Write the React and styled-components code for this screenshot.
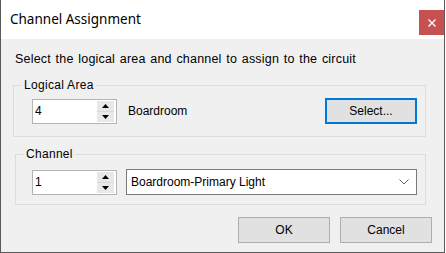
import React from "react";
import styled, { createGlobalStyle } from "styled-components";

const GlobalStyle = createGlobalStyle`
  body {
    margin: 0;
    background: #ffffff;
    font-family: "Liberation Sans", Arial, sans-serif;
  }
`;

const Window = styled.div`
  width: 443px;
  height: 252px;
  border: 1px solid #5b5b5b;
  border-top: none;
  background: #f0f0f0;
  display: flex;
  flex-direction: column;
`;

const TitleBar = styled.div`
  height: 39px;
  flex: none;
  background: #ffffff;
  display: flex;
  align-items: flex-start;
  justify-content: space-between;
  padding-left: 9px;
`;

const Title = styled.span`
  font-family: "Noto Sans", "Open Sans", sans-serif;
  font-size: 13.5px;
  line-height: 18px;
  margin-top: 10px;
  color: #000;
`;

const CloseButton = styled.div`
  width: 25px;
  height: 25px;
  margin-top: 10px;
  background: #c75050;
  display: flex;
  align-items: center;
  justify-content: center;
`;

const Body = styled.div`
  flex: 1;
  padding: 13px 15px 0 12px;
  display: flex;
  flex-direction: column;
  font-size: 12px;
  color: #000;
`;

const Instruction = styled.div`
  font-size: 12.5px;
  line-height: 14px;
  padding-left: 2px;
  margin-bottom: 12px;
  letter-spacing: 0.2px;
  word-spacing: 1px;
`;

const Group = styled.fieldset`
  margin: 0 3px ${(p) => p.$gap}px ${(p) => p.$shift}px;
  padding: 0;
  min-width: 0;
  border: 1px solid #dcdcdc;
`;

const Legend = styled.legend`
  margin-left: 8px;
  padding: 0 2px;
  line-height: 14px;
  font-size: 12px;
  letter-spacing: 0.3px;
`;

const GroupRow = styled.div`
  display: flex;
  align-items: center;
  padding: ${(p) => p.$top}px 8px ${(p) => p.$bottom}px
    ${(p) => 18 - p.$shift}px;
`;

const Spin = styled.div`
  width: 83px;
  height: 23px;
  flex: none;
  border: 1px solid #b4b4b4;
  background: #fff;
  display: flex;
  align-items: stretch;
`;

const SpinValue = styled.div`
  flex: 1;
  padding-left: 2px;
  line-height: 23px;
`;

const SpinButtons = styled.div`
  width: 17px;
  margin: 1px 2px 1px 0;
  display: flex;
  flex-direction: column;
  gap: 1px;
  background: #d8d8d8;
`;

const SpinArrow = styled.div`
  flex: 1;
  background: #e8e8e8;
  display: flex;
  align-items: center;
  justify-content: center;
`;

const AreaName = styled.span`
  margin-left: 11px;
  flex: 1;
`;

const Button = styled.div`
  width: ${(p) => (p.$focused ? 88 : 90)}px;
  height: ${(p) => (p.$focused ? 22 : 24)}px;
  flex: none;
  background: #e1e1e1;
  border: ${(p) => (p.$focused ? "2px solid #0078d7" : "1px solid #adadad")};
  display: flex;
  align-items: center;
  justify-content: center;
  font-size: 12px;
`;

const Combo = styled.div`
  flex: 1;
  height: 24px;
  margin-left: 9px;
  border: 1px solid #7a7a7a;
  background: #fff;
  display: flex;
  align-items: center;
  justify-content: space-between;
  padding: 0 7px 0 4px;
`;

const Footer = styled.div`
  display: flex;
  justify-content: flex-end;
  gap: 10px;
  margin-right: -3px;
`;

function Arrow({ up }) {
  return (
    <svg width="7" height="4" viewBox="0 0 7 4">
      <path d={up ? "M0 4 L3.5 0 L7 4 Z" : "M0 0 L3.5 4 L7 0 Z"} fill="#000" />
    </svg>
  );
}

function SpinBox({ value }) {
  return (
    <Spin>
      <SpinValue>{value}</SpinValue>
      <SpinButtons>
        <SpinArrow>
          <Arrow up />
        </SpinArrow>
        <SpinArrow>
          <Arrow />
        </SpinArrow>
      </SpinButtons>
    </Spin>
  );
}

export default function App() {
  return (
    <>
      <GlobalStyle />
      <Window>
        <TitleBar>
          <Title>Channel Assignment</Title>
          <CloseButton>
            <svg width="8" height="8" viewBox="0 0 8 8">
              <path d="M0.5 0.5 L7.5 7.5 M7.5 0.5 L0.5 7.5" stroke="#fff" strokeWidth="1.3" />
            </svg>
          </CloseButton>
        </TitleBar>
        <Body>
          <Instruction>
            Select the logical area and channel to assign to the circuit
          </Instruction>
          {/* Logical Area */}
          <Group $shift={0} $gap={10}>
            <Legend>Logical Area</Legend>
            <GroupRow $shift={0} $top={6} $bottom={12}>
              <SpinBox value="4" />
              <AreaName>Boardroom</AreaName>
              <Button $focused>Select...</Button>
            </GroupRow>
          </Group>
          {/* Channel */}
          <Group $shift={2} $gap={12}>
            <Legend>Channel</Legend>
            <GroupRow $shift={2} $top={8} $bottom={9}>
              <SpinBox value="1" />
              <Combo>
                <span>Boardroom-Primary Light</span>
                <svg width="10" height="6" viewBox="0 0 10 6">
                  <path d="M0.5 0.5 L5 5 L9.5 0.5" stroke="#606060" strokeWidth="1" fill="none" />
                </svg>
              </Combo>
            </GroupRow>
          </Group>
          <Footer>
            <Button>OK</Button>
            <Button>Cancel</Button>
          </Footer>
        </Body>
      </Window>
    </>
  );
}
